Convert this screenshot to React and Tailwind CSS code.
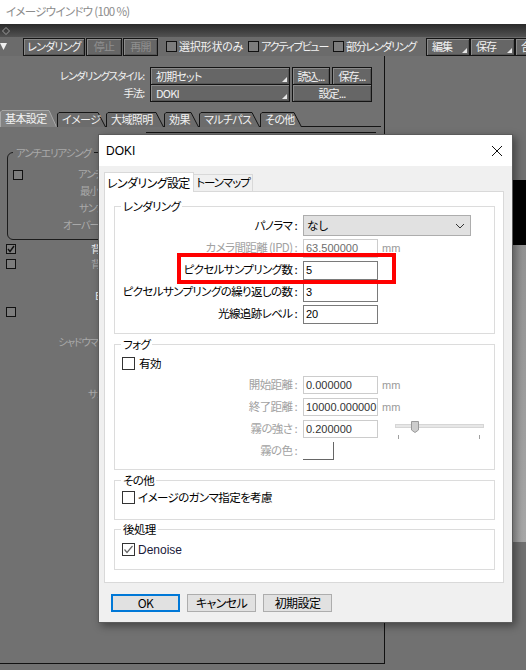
import React from 'react';

const JP = "font-['Noto_Sans_CJK_JP',sans-serif] [font-feature-settings:'palt']";
const NUM = "font-['Liberation_Sans',sans-serif]";

function Corner({ color = '#e6e6e6' }) {
  return (
    <svg className="absolute bottom-[2px] right-[2px]" width="5" height="5" viewBox="0 0 5 5">
      <polygon points="5,0 5,5 0,5" fill={color} />
    </svg>
  );
}

function AppBtn({ label, className = '', dim = false, drop = false, left = false }) {
  return (
    <div
      className={`relative flex h-[18px] shrink-0 items-center border border-[#141414] bg-[#666666] text-[11px] leading-none tracking-[-0.8px] shadow-[inset_1px_1px_0_#8a8a8a,inset_-1px_-1px_0_#555555] ${left ? 'justify-start pl-[5px]' : 'justify-center'} ${dim ? 'text-[#8f8f8f]' : 'text-[#f2f2f2]'} ${className}`}
    >
      {label}
      {drop && <Corner />}
    </div>
  );
}

function AppCheck({ checked = false, className = '' }) {
  return (
    <span className={`flex h-[10px] w-[10px] shrink-0 items-center justify-center border border-[#111] bg-[#7d7d7d] ${className}`}>
      {checked && (
        <svg width="8" height="8" viewBox="0 0 8 8">
          <path d="M1 4 L3 6.5 L7 1" fill="none" stroke="#111" strokeWidth="1.4" />
        </svg>
      )}
    </span>
  );
}

function AppTab({ label, w, active = false }) {
  const h = active ? 16 : 14;
  return (
    <div className="relative flex shrink-0 items-center pl-[5px] text-[11px] leading-none tracking-[-0.6px] text-[#f2f2f2]" style={{ width: w, height: h }}>
      <svg className="absolute inset-0" width={w} height={h + 1} viewBox={`0 0 ${w} ${h + 1}`}>
        <path
          d={`M0.5 ${h + 1} L0.5 2 L2 0.5 L${w - 8} 0.5 L${w - 0.5} ${h + 1}`}
          fill={active ? '#838383' : '#6c6c6c'}
          stroke={active ? '#a8a8a8' : '#151515'}
          strokeWidth="1"
        />
      </svg>
      <span className="relative">{label}</span>
    </div>
  );
}

function Toolbar() {
  return (
    <div className={`flex h-[19px] items-center bg-[#6b6b6b] ${JP}`}>
      <svg className="mr-[16px] shrink-0" width="7" height="7" viewBox="0 0 7 7">
        <polygon points="0,0 7,0 3.5,7" fill="#f0f0f0" />
      </svg>
      <AppBtn label="レンダリング" className="w-[62px]" />
      <AppBtn label="停止" className="ml-[1px] w-[36px]" dim />
      <AppBtn label="再開" className="ml-[1px] w-[35px]" dim />
      <AppCheck className="ml-[8px] h-[11px] w-[11px]" />
      <span className="ml-[2px] shrink-0 text-[11px] leading-none tracking-[-0.2px] text-[#f2f2f2]">選択形状のみ</span>
      <AppCheck className="ml-[5px] h-[11px] w-[11px]" />
      <span className="ml-[2px] shrink-0 text-[11px] leading-none tracking-[-1.3px] text-[#f2f2f2]">アクティブビュー</span>
      <AppCheck className="ml-[5px] h-[11px] w-[11px]" />
      <span className="ml-[2px] shrink-0 text-[11px] leading-none tracking-[-1.3px] text-[#f2f2f2]">部分レンダリング</span>
      <AppBtn label="編集" className="ml-[10px] w-[44px]" drop left />
      <AppBtn label="保存" className="w-[45px]" drop left />
      <AppBtn label="合成" className="w-[40px]" drop left />
    </div>
  );
}

function LeftPanel() {
  return (
    <div className={`h-[608px] w-[385px] shrink-0 border-b border-r border-[#111] ${JP} text-[10.5px] leading-none tracking-[-1.1px]`}>
      <div className="mt-[12px] flex h-[16px] items-center">
        <span className="w-[150px] pr-[6px] text-right text-[#f2f2f2]">レンダリングスタイル:</span>
        <AppBtn label="初期セット" className="h-[16px] w-[140px]" drop left />
        <AppBtn label="読込..." className="ml-[2px] h-[16px] w-[38px]" />
        <AppBtn label="保存..." className="ml-[2px] h-[16px] w-[40px]" />
      </div>
      <div className="mt-[1px] flex h-[16px] items-center">
        <span className="w-[150px] pr-[6px] text-right text-[#f2f2f2]">手法:</span>
        <AppBtn label="DOKI" className="h-[16px] w-[140px]" drop left />
        <AppBtn label="設定..." className="ml-[2px] h-[16px] w-[80px]" />
      </div>

      <div className="mt-[10px] flex h-[16px] w-[381px] items-end border-b border-[#151515]">
        <AppTab label="基本設定" w={57} active />
        <AppTab label="イメージ" w={49} />
        <AppTab label="大域照明" w={58} />
        <AppTab label="効果" w={35} />
        <AppTab label="マルチパス" w={61} />
        <AppTab label="その他" w={42} />
      </div>

      <div className="ml-[146px] mt-[5px] h-[1px] w-[230px] bg-[#111]" />

      {/* the rest of this tab lies under the dialog, so it is clipped at its left edge */}
      <div className="w-[99px] overflow-hidden pb-[2px] pt-[19px]">
        <div className="relative ml-[7px] h-[88px] w-[200px] rounded-[6px] border border-[#1c1c1c] pt-[13px]">
          <span className="absolute left-[5px] top-[-7px] bg-[#717171] px-[3px] leading-[13px] text-[#a9a9a9]">アンチエリアシング</span>
          <div className="flex h-[17px] items-center">
            <AppCheck className="ml-[5px]" />
            <span className="ml-[55px] text-[#a9a9a9]">アンチエイリアス</span>
          </div>
          <div className="flex h-[17px] items-center"><span className="ml-[72px] text-[#a9a9a9]">最小サンプル数</span></div>
          <div className="flex h-[17px] items-center"><span className="ml-[71px] text-[#a9a9a9]">サンプル数</span></div>
          <div className="flex h-[17px] items-center"><span className="ml-[55px] text-[#a9a9a9]">オーバーサンプリング</span></div>
        </div>

        <div className="mt-[4px] flex h-[10px] items-center">
          <AppCheck checked className="ml-[6px] h-[9px] w-[9px]" />
          <span className="ml-[75px] text-[#f2f2f2]">背景</span>
        </div>
        <div className="mt-[5px] flex h-[10px] items-center">
          <AppCheck className="ml-[6px] h-[9px] w-[9px]" />
          <span className="ml-[75px] text-[#a9a9a9]">背景色</span>
        </div>
        <div className="mt-[22px] flex h-[10px] items-center">
          <span className="ml-[95px] text-[#f2f2f2]">E</span>
        </div>
        <div className="mt-[6px] flex h-[10px] items-center">
          <AppCheck className="ml-[6px] h-[9px] w-[9px]" />
        </div>
        <div className="mt-[20px] flex h-[10px] items-center">
          <span className="ml-[58px] text-[#a9a9a9]">シャドウマップ</span>
        </div>
        <div className="mt-[42px] flex h-[10px] items-center">
          <span className="ml-[88px] text-[#a9a9a9]">サンプル</span>
        </div>
      </div>
    </div>
  );
}

function RightArea() {
  return (
    <div className="flex-1 pl-[20px] pt-[124px]">
      <div className="h-[65px] rounded-bl-[20px] bg-black" />
      <div className="h-[297px] bg-gradient-to-b from-[#939393] to-[#a8a8a8]" />
    </div>
  );
}

function Check({ checked = false }) {
  return (
    <span className="flex h-[13px] w-[13px] shrink-0 items-center justify-center border border-[#333] bg-white">
      {checked && (
        <svg width="11" height="11" viewBox="0 0 11 11">
          <path d="M1.5 5.5 L4 8.5 L9.5 2" fill="none" stroke="#666" strokeWidth="1.2" />
        </svg>
      )}
    </span>
  );
}

function Group({ title, className = '', children }) {
  return (
    <div className={`relative w-[381px] border border-[#dcdcdc] ${className}`}>
      <span className="absolute left-[6px] top-[-9px] bg-white px-[2px] leading-[16px]">{title}</span>
      {children}
    </div>
  );
}

function Row({ label, dim = false, className = 'h-[20px]', children }) {
  return (
    <div className={`flex items-center ${className}`}>
      <div className={`flex w-[182px] justify-end ${dim ? 'text-[#a2a2a2]' : 'text-black'}`}>
        <span>{label}</span>
      </div>
      <div className="ml-[6px] flex items-center tracking-normal">{children}</div>
    </div>
  );
}

function Field({ value, dim = false, tone = 'text-black', h = 'h-[19px]' }) {
  return (
    <div className={`flex w-[75px] items-center pl-[2px] text-[11px] ${NUM} ${h} border ${dim ? 'border-[#cccccc]' : 'border-[#7a7a7a]'} ${tone}`}>
      {value}
    </div>
  );
}

function Unit() {
  return <span className={`ml-[4px] text-[11px] text-[#9a9a9a] ${NUM}`}>mm</span>;
}

function Slider() {
  return (
    <svg className="ml-[17px]" width="90" height="19" viewBox="0 0 90 19">
      <rect x="0.5" y="4.5" width="88" height="3" fill="#e7e7e7" stroke="#d6d6d6" />
      <path d="M16.5 1.5 H23.5 V10 L20 12.5 L16.5 10 Z" fill="#cdcdcd" stroke="#9a9a9a" />
      <line x1="3.5" y1="15" x2="3.5" y2="19" stroke="#a0a0a0" />
      <line x1="84.5" y1="15" x2="84.5" y2="19" stroke="#a0a0a0" />
    </svg>
  );
}

function DlgBtn({ label, primary = false }) {
  return (
    <div
      className={`flex h-[18px] w-[69px] items-center justify-center bg-[#e1e1e1] leading-none ${primary ? 'border-2 border-[#0078d7]' : 'border border-[#adadad]'}`}
    >
      {label}
    </div>
  );
}

function Dialog() {
  return (
    <div className={`absolute left-[98px] top-[134px] flex h-[489px] w-[415px] flex-col border border-[#5b5b5b] bg-[#f0f0f0] text-[11.5px] leading-none tracking-[-0.6px] text-black shadow-[3px_3px_8px_rgba(0,0,0,0.4)] ${JP}`}>
      <div className="flex h-[31px] shrink-0 items-center justify-between bg-white pl-[7px] pr-[9px]">
        <span className={`text-[12px] tracking-normal ${NUM}`}>DOKI</span>
        <svg width="12" height="12" viewBox="0 0 12 12">
          <path d="M1 1 L11 11 M11 1 L1 11" stroke="#111" strokeWidth="1" />
        </svg>
      </div>

      <div className="pl-[5px] pt-[6px]">
        <div className="flex h-[19px] items-end">
          <div className="relative z-10 -mb-px flex h-[20px] w-[90px] items-center border border-b-0 border-[#d9d9d9] bg-white pl-[2px] text-[12px]">レンダリング設定</div>
          <div className="flex h-[17px] w-[59px] items-center justify-center border border-b-0 border-l-0 border-[#d9d9d9] bg-[#f0f0f0] text-[11.5px] tracking-[-1px]">トーンマップ</div>
        </div>

        <div className="h-[392px] w-[400px] border border-[#d9d9d9] bg-white pl-[9px]">
          <Group title="レンダリング" className="mt-[14px] h-[128px] pt-[8px]">
            <Row label="パノラマ :" className="h-[21px]">
              <div className="flex h-[21px] w-[168px] items-center justify-between border border-[#adadad] bg-[#e1e1e1] pl-[3px] pr-[5px]">
                <span>なし</span>
                <svg width="10" height="6" viewBox="0 0 10 6">
                  <path d="M1 1 L5 5 L9 1" fill="none" stroke="#333" strokeWidth="1" />
                </svg>
              </div>
            </Row>
            <Row label="カメラ間距離 (IPD) :" dim className="mt-[2px] h-[20px]">
              <Field value="63.500000" dim tone="text-[#6d6d6d]" />
              <Unit />
            </Row>
            <Row label="ピクセルサンプリング数 :" className="mt-[2px] h-[20px]">
              <Field value="5" />
            </Row>
            <Row label="ピクセルサンプリングの繰り返しの数 :" className="mt-[2px] h-[20px]">
              <Field value="3" />
            </Row>
            <Row label="光線追跡レベル :" className="mt-[2px] h-[20px]">
              <Field value="20" />
            </Row>
          </Group>

          <Group title="フォグ" className="mt-[10px] h-[126px] pt-[12px]">
            <div className="flex h-[13px] items-center pl-[7px]">
              <Check />
              <span className="ml-[4px]">有効</span>
            </div>
            <Row label="開始距離 :" dim className="mt-[6px] h-[18px]">
              <Field value="0.000000" dim tone="text-[#333]" h="h-[18px]" />
              <Unit />
            </Row>
            <Row label="終了距離 :" dim className="mt-[4px] h-[18px]">
              <Field value="10000.000000" dim tone="text-[#333]" h="h-[18px]" />
              <Unit />
            </Row>
            <Row label="霧の強さ :" dim className="mt-[4px] h-[18px]">
              <Field value="0.200000" dim tone="text-[#333]" h="h-[18px]" />
              <Slider />
            </Row>
            <Row label="霧の色 :" dim className="mt-[4px] h-[18px]">
              <div className="h-[18px] w-[31px] border-b border-r border-[#666] bg-white" />
            </Row>
          </Group>

          <Group title="その他" className="mt-[10px] h-[40px] pt-[10px]">
            <div className="flex h-[13px] items-center pl-[7px]">
              <Check />
              <span className="ml-[3px]">イメージのガンマ指定を考慮</span>
            </div>
          </Group>

          <Group title="後処理" className="mt-[9px] h-[41px] pt-[13px]">
            <div className="flex h-[13px] items-center pl-[7px]">
              <Check checked />
              <span className={`ml-[3px] text-[12px] tracking-normal ${NUM} text-[#1a1a3a]`}>Denoise</span>
            </div>
          </Group>
        </div>
      </div>

      <div className="mt-[11px] flex gap-[7px] pl-[12px] text-[12px]">
        <DlgBtn label="OK" primary />
        <DlgBtn label="キャンセル" />
        <DlgBtn label="初期設定" />
      </div>
    </div>
  );
}

export default function App() {
  return (
    <div className={`relative h-[670px] w-[526px] overflow-hidden whitespace-nowrap bg-[#717171] ${JP}`}>
      <div className="h-[24px] bg-white pl-[6px] pt-[2px] text-[11.5px] leading-[18px] tracking-[-0.7px] text-[#8c8c8c]">イメージウインドウ (100 %)</div>
      <div className="flex h-[13px] items-center bg-gradient-to-b from-[#2a2a2a] to-[#525252] pl-[2px]">
        <svg width="8" height="8" viewBox="0 0 8 8">
          <path d="M4 0.5 L7.5 4 L4 7.5 L0.5 4 Z" fill="none" stroke="#9a9a9a" strokeWidth="1" />
        </svg>
      </div>
      <Toolbar />
      <div className="flex">
        <LeftPanel />
        <RightArea />
      </div>
      <Dialog />
      <div className="absolute left-[177px] top-[253px] h-[31px] w-[219px] border-4 border-[#ff0000]" />
    </div>
  );
}
